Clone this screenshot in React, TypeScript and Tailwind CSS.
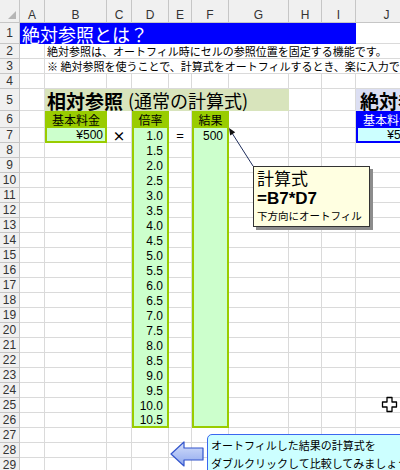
import { Fragment, type ReactNode } from "react"

const LETTERS = ["A", "B", "C", "D", "E", "F", "G", "H", "I", "J", "K"]
const RATES = Array.from({ length: 20 }, (_, i) => (1 + i * 0.5).toFixed(1))

// plain sheet cell with Excel gridlines
const grid = "border-r border-b border-[#dadada]"

type Cell = { className: string; children?: ReactNode }

function cellsFor(r: number): Cell[] {
  const blank = (): Cell => ({ className: grid })
  const blanks = (n: number) => Array.from({ length: n }, blank)

  if (r === 1)
    return [
      {
        className: "col-span-9 flex items-center bg-[#0000ff] pl-[2px] text-[18px] leading-none text-white",
        children: "絶対参照とは？",
      },
      ...blanks(2),
    ]

  if (r === 2 || r === 3)
    return [
      blank(),
      {
        className: "col-span-10 flex items-center overflow-hidden whitespace-nowrap border-b border-[#dadada] pl-[2px] text-[11px] leading-none",
        children:
          r === 2
            ? "絶対参照は、オートフィル時にセルの参照位置を固定する機能です。"
            : "※ 絶対参照を使うことで、計算式をオートフィルするとき、楽に入力できます。",
      },
    ]

  if (r === 5)
    return [
      blank(),
      {
        className: "col-span-6 flex items-center whitespace-nowrap bg-[#d8e4bc] pl-[2px] leading-none",
        children: (
          <>
            <span className="text-[19px] font-bold">相対参照</span>
            <span className="ml-[5px] text-[18px]">(通常の計算式)</span>
          </>
        ),
      },
      ...blanks(2),
      {
        className: "col-span-2 flex items-center overflow-hidden whitespace-nowrap bg-[#dcdff3] pl-[4px] text-[19px] font-bold leading-none",
        children: "絶対参照(固定した計算式)",
      },
    ]

  if (r === 6)
    return [
      blank(),
      { className: "flex items-center justify-center bg-[#99cc00] text-[12px] leading-none", children: "基本料金" },
      blank(),
      { className: "flex items-center justify-center bg-[#99cc00] text-[12px] leading-none", children: "倍率" },
      blank(),
      { className: "flex items-center justify-center bg-[#99cc00] text-[12px] leading-none", children: "結果" },
      ...blanks(3),
      {
        className: "flex items-center justify-center overflow-hidden whitespace-nowrap bg-[#0000ff] text-[12px] leading-none text-white",
        children: "基本料金",
      },
      blank(),
    ]

  if (r === 7)
    return [
      blank(),
      {
        className: "flex items-center justify-end border-x-2 border-b-2 border-[#99cc00] bg-[#ccffcc] pr-[2px] font-['Liberation_Sans',sans-serif] text-[12px] leading-none",
        children: "¥500",
      },
      { className: `${grid} flex items-center justify-center text-[13px] font-bold leading-none`, children: "×" },
      {
        className: "flex items-center justify-end border-x-2 border-[#99cc00] bg-[#ccffcc] pr-[4px] font-['Liberation_Sans',sans-serif] text-[12px] leading-none",
        children: RATES[0],
      },
      { className: `${grid} flex items-center justify-center font-['Liberation_Sans',sans-serif] text-[13px] leading-none`, children: "=" },
      {
        className: "flex items-center justify-end border-x-2 border-[#99cc00] bg-[#ccffcc] pr-[4px] font-['Liberation_Sans',sans-serif] text-[12px] leading-none",
        children: "500",
      },
      ...blanks(3),
      {
        className: "flex items-center justify-end border-x-2 border-b-2 border-[#0000ff] bg-[#ccffff] pr-[2px] font-['Liberation_Sans',sans-serif] text-[12px] leading-none",
        children: "¥500",
      },
      blank(),
    ]

  if (r >= 8 && r <= 26) {
    const last = r === 26
    return [
      ...blanks(3),
      {
        className: last
          ? "flex items-center justify-end border-x-2 border-b-2 border-[#99cc00] bg-[#ccffcc] pr-[4px] font-['Liberation_Sans',sans-serif] text-[12px] leading-none"
          : "flex items-center justify-end border-x-2 border-[#99cc00] bg-[#ccffcc] pr-[4px] font-['Liberation_Sans',sans-serif] text-[12px] leading-none",
        children: RATES[r - 7],
      },
      blank(),
      {
        className: last
          ? "border-x-2 border-b-2 border-[#99cc00] bg-[#ccffcc]"
          : "border-x-2 border-[#99cc00] bg-[#ccffcc]",
      },
      ...blanks(5),
    ]
  }

  return blanks(11)
}

function Overlays() {
  return (
    <>
      <svg className="pointer-events-none absolute left-0 top-0" width="400" height="470" viewBox="0 0 400 470">
        <defs>
          <linearGradient id="arrowFill" x1="0" y1="0" x2="0" y2="1">
            <stop offset="0" stopColor="#d6e0fb" />
            <stop offset="1" stopColor="#8fa8ee" />
          </linearGradient>
        </defs>
        {/* connector from the note to F7 */}
        <line x1="253" y1="166" x2="232" y2="133" stroke="#1e2d5c" strokeWidth="1" />
        <polygon points="229,128 235.2,132.3 230.2,135.5" fill="#111" />
        {/* block arrow */}
        <polygon
          points="171,454 184,442 184,448 203,448 203,460 184,460 184,466"
          fill="url(#arrowFill)"
          stroke="#3355cc"
          strokeWidth="1.2"
          strokeLinejoin="round"
        />
        {/* excel cell cursor */}
        <path
          d="M387 397.5 H392 V402 H396.5 V407 H392 V411.5 H387 V407 H382.5 V402 H387 Z"
          fill="#fff"
          stroke="#000"
          strokeWidth="1.3"
          strokeLinejoin="round"
        />
      </svg>

      <div className="absolute left-[253px] top-[166px] h-[61px] w-[117px] border border-[#333] bg-[#ffffe1] px-[3px] pt-[1px] shadow-[3px_3px_0_#8c8c8c]">
        <div className="text-[17px] leading-[20px]">計算式</div>
        <div className="font-['Liberation_Sans',sans-serif] text-[17px] font-bold leading-[21px]">=B7*D7</div>
        <div className="whitespace-nowrap text-[10.5px] leading-[14px]">下方向にオートフィル</div>
      </div>

      <div className="absolute left-[207px] top-[434px] h-[42px] w-[220px] whitespace-nowrap rounded-[5px] border-[1.5px] border-[#3a66f0] bg-[#ccffff] px-[3px] pt-[1px] text-[11px] leading-[18px]">
        <div>オートフィルした結果の計算式を</div>
        <div>ダブルクリックして比較してみましょう</div>
      </div>
    </>
  )
}

export default function App() {
  const rows = Array.from({ length: 29 }, (_, i) => i + 1)

  return (
    <div className="relative h-[470px] w-[400px] overflow-hidden bg-white font-['Noto_Sans_CJK_JP',sans-serif] text-black">
      <div className="grid w-max grid-cols-[20px_25px_62px_25px_37px_23px_37px_60px_33px_34px_62px_62px] grid-rows-[23px_21px_15px_15px_15px_22px_17px_repeat(23,15px)]">
        <div className="flex items-end justify-end border-r border-b border-[#c6c6c6] bg-[#f0f0f0] p-[3px]">
          <svg width="8" height="8" viewBox="0 0 8 8">
            <polygon points="8,0 8,8 0,8" fill="#b5b5b5" />
          </svg>
        </div>
        {LETTERS.map((l) => (
          <div
            key={l}
            className="flex items-center justify-center border-r border-b border-[#c6c6c6] bg-[#f0f0f0] pt-[7px] font-['Liberation_Sans',sans-serif] text-[12px] leading-none text-[#333]"
          >
            {l}
          </div>
        ))}

        {rows.map((r) => (
          <Fragment key={r}>
            <div className="flex items-center justify-center border-r border-b border-[#c6c6c6] bg-[#f0f0f0] font-['Liberation_Sans',sans-serif] text-[12px] leading-none text-[#333]">
              {r}
            </div>
            {cellsFor(r).map((c, i) => (
              <div key={i} className={c.className}>
                {c.children}
              </div>
            ))}
          </Fragment>
        ))}
      </div>

      <Overlays />
    </div>
  )
}
